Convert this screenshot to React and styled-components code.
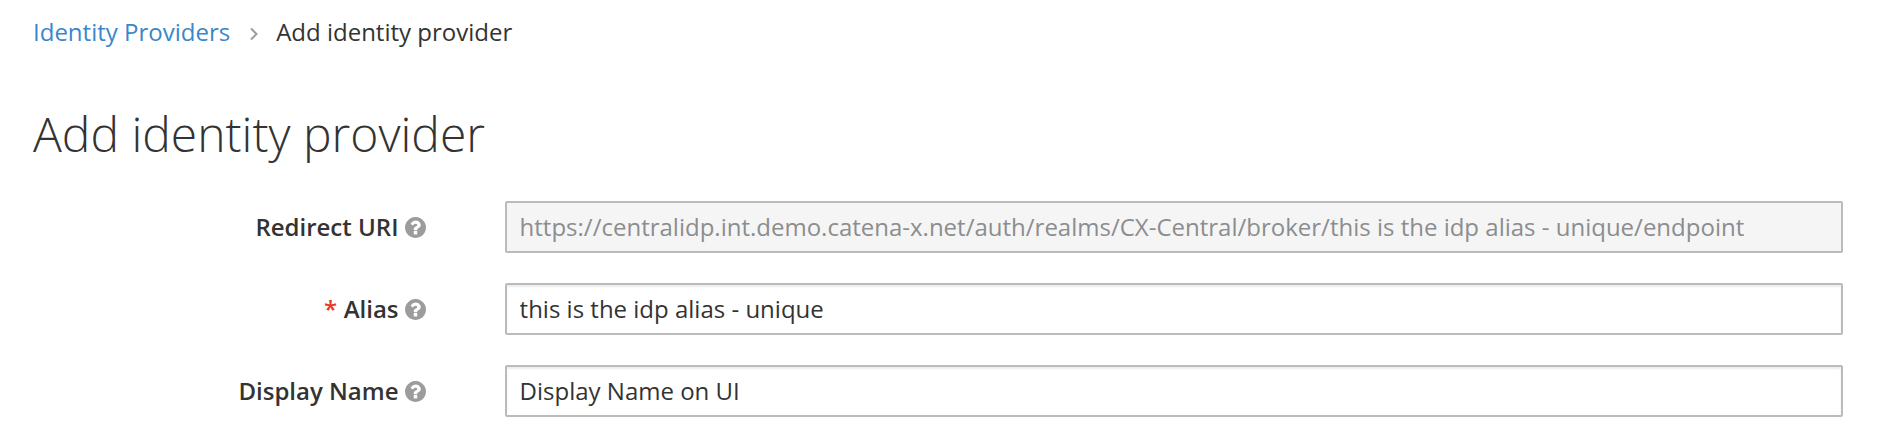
import React from "react";
import styled, { createGlobalStyle } from "styled-components";

const Global = createGlobalStyle`
  * { box-sizing: border-box; }
  body { margin: 0; background: #fff; font-family: "Open Sans", "Noto Sans", sans-serif; color: #333; }
`;
const Page = styled.main`
  height: 434px;
  overflow: hidden;
  padding: 13px 55px 0 33px;
`;
const Breadcrumb = styled.nav`
  display: flex;
  align-items: center;
  height: 36px;
  font-size: 24px;
  white-space: nowrap;
`;
const Crumb = styled.a`
  color: #3a87cb;
  text-decoration: none;
`;
const Chevron = styled.svg`
  width: 10px;
  height: 16px;
  margin: 5px 17px 0 19px;
`;
const Title = styled.h1`
  margin: 51px 0 0;
  height: 68px;
  line-height: 68px;
  font-size: 48px;
  font-weight: 300;
  white-space: nowrap;
`;
const Form = styled.form`
  display: grid;
  gap: 30px;
  margin-top: 33px;
`;
const Row = styled.div`
  display: grid;
  grid-template-columns: 393px 1fr;
  column-gap: 79px;
  align-items: center;
  height: 52px;
`;
const Label = styled.label`
  display: flex;
  justify-content: flex-end;
  align-items: center;
  gap: 6.500px;
  font-size: 24px;
  font-weight: 600;
  white-space: nowrap;
`;
const LabelText = styled.span`
  padding-bottom: 2px;
`;
const Required = styled(LabelText)`
  color: #ee3424;
`;
const HelpIcon = styled.svg`
  width: 21px;
  height: 21px;
  fill: #9c9c9c;
`;
const Input = styled.input`
  width: 100%;
  height: 52px;
  padding: 0 12.600px 2px;
  border: 2px solid #bbb;
  border-radius: 2px;
  background: ${(p) => (p.disabled ? "#f5f5f5" : "#fff")};
  color: ${(p) => (p.disabled ? "#8b8d8f" : "#333")};
  font: 400 24px "Open Sans", "Noto Sans", sans-serif;
  box-shadow: ${(p) => (p.disabled ? "none" : "inset 0 2px 2px rgba(3, 3, 3, 0.075)")};
  outline: none;
`;

function Field({ id, label, value, required, disabled }) {
  return (
    <Row>
      <Label htmlFor={id}>
        {required && <Required>*</Required>}
        <LabelText>{label}</LabelText>
        <HelpIcon viewBox="0 128 1536 1536" aria-hidden="true">
          <path d="M896 1376v-192q0-14-9-23t-23-9h-192q-14 0-23 9t-9 23v192q0 14 9 23t23 9h192q14 0 23-9t9-23zm256-672q0-88-55.500-163t-138.500-116-170-41q-243 0-371 213-15 24 8 42l132 100q7 6 19 6 16 0 25-12 53-68 86-92 34-24 86-24 48 0 85.500 26t37.500 59q0 38-20 61t-68 45q-63 28-115.500 86.500t-52.500 125.500v36q0 14 9 23t23 9h192q14 0 23-9t9-23q0-19 21.500-49.500t54.500-49.500q32-18 49-28.500t46-35 44.500-48 28-60.500 12.500-81zm384 192q0 209-103 385.500t-279.500 279.500-385.500 103-385.500-103-279.500-279.500-103-385.500 103-385.500 279.500-279.500 385.500-103 385.500 103 279.500 279.500 103 385.500z" />
        </HelpIcon>
      </Label>
      <Input id={id} defaultValue={value} disabled={disabled} spellCheck={false} />
    </Row>
  );
}

export default function App() {
  return (
    <Page>
      <Global />
      <Breadcrumb>
        <Crumb>Identity Providers</Crumb>
        <Chevron viewBox="0 0 10 16">
          <path d="M2 2.500l5.500 5.500L2 13.500" fill="none" stroke="#9c9c9c" strokeWidth="2" />
        </Chevron>
        <span>Add identity provider</span>
      </Breadcrumb>
      <Title>Add identity provider</Title>
      <Form>
        <Field id="uri" label="Redirect URI" disabled value="https://centralidp.int.demo.catena-x.net/auth/realms/CX-Central/broker/this is the idp alias - unique/endpoint" />
        <Field id="alias" label="Alias" required value="this is the idp alias - unique" />
        <Field id="name" label="Display Name" value="Display Name on UI" />
      </Form>
    </Page>
  );
}
